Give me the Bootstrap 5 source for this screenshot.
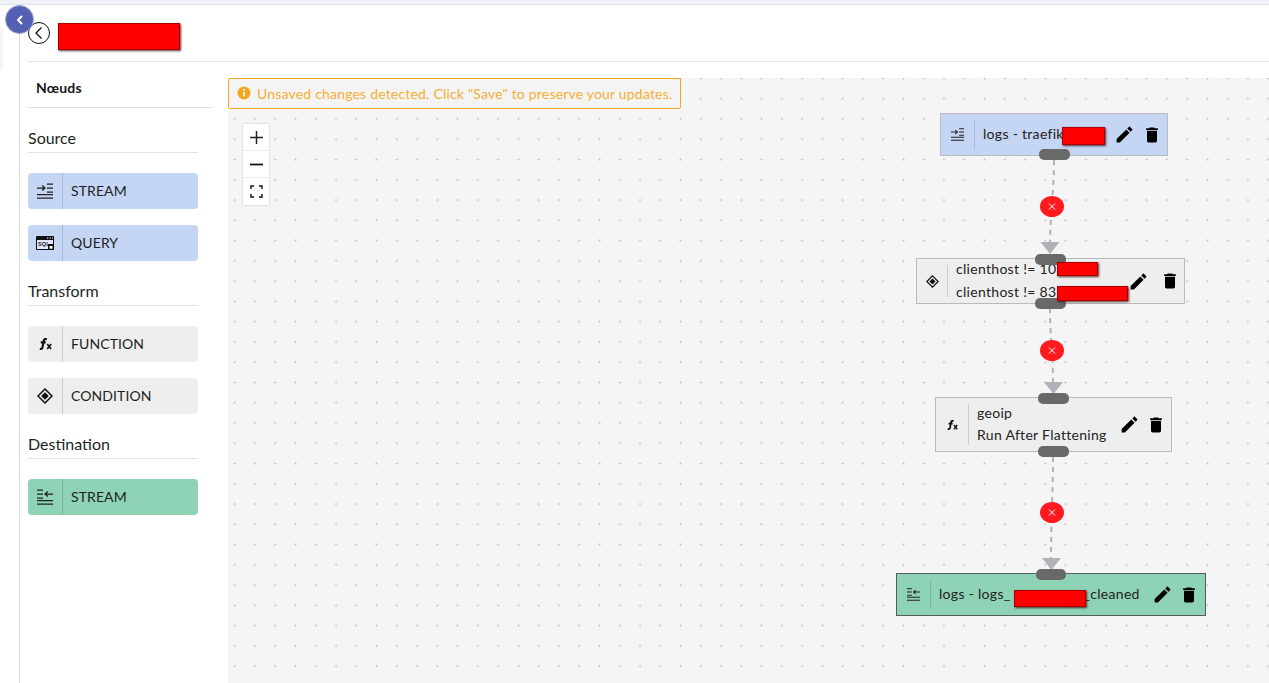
<!DOCTYPE html>
<html lang="fr">
<head>
<meta charset="utf-8">
<title>Pipeline</title>
<link href="https://cdn.jsdelivr.net/npm/bootstrap@5.3.0/dist/css/bootstrap.min.css" rel="stylesheet">
<style>
html,body{height:100%;overflow:hidden}
body{font-family:"Lato","Noto Sans",sans-serif;font-size:14px;color:#1d1f22;background:#fff}
.sprite{position:absolute;width:0;height:0}
.topstrip{height:5px;background:#f1f2f7;border-bottom:1px solid #dfe0e5}
.shell{height:678px}
.rail{width:20px;border-right:1px solid #dcdcdc;padding-top:22px}
.railtab{width:3px;height:43px;background:#f5f5f5;border-radius:0 3px 3px 0}
.collapse-btn{position:absolute;left:5px;top:5px;width:29px;height:29px;border-radius:50%;background:#5360b4;border:1px solid #a9afd6;z-index:5}
.pagehead{height:57px;margin-left:8px;border-bottom:1px solid #e2e2e2}
.backbtn{width:22px;height:22px;border-radius:50%;border:1px solid #111;background:#fff}
.side{width:208px;padding-left:8px}
.sidetitle{font-weight:700;font-size:14px;letter-spacing:.2px;width:184px;height:46px;padding:15px 0 0 8px;border-bottom:1px solid #e2e2e2;color:#16181b}
.grouplabel{width:170px;font-size:16px;line-height:20px;border-bottom:1px solid #e2e2e2;padding-bottom:4px;margin-bottom:20px;color:#1d1f22}
.grouplabel.first{margin-top:20px}
.grouplabel.mid{margin-top:20px}
.palette{width:170px;height:36px;border-radius:4px;margin-bottom:16px;font-size:14px;letter-spacing:.1px}
.palette .ic{width:35px;height:100%;border-right:1px solid rgba(0,0,0,.14)}
.palette .lb{padding:0 0 2px 8px}
.src{background:#c5d5f4}.trf{background:#eeeeee}.dst{background:#8fd3b6}
.canvas{position:relative;flex:1;margin-top:16px;background-color:#f5f5f5;background-image:radial-gradient(circle,#c4c4c4 .8px,transparent 1.2px);background-size:20.28px 20.28px;background-position:-3.44px 10.6px;overflow:hidden}
.toast-note{position:absolute;left:0;top:0;width:453px;height:31px;border:1px solid #f5a81f;border-radius:2px;background:#f4f4f4;color:#f6ae35;font-size:14px;letter-spacing:.19px;padding:0 0 1px 8px;gap:6px;white-space:nowrap}
.zoombox{position:absolute;left:15px;top:46px;width:26px;background:#fff;box-shadow:0 0 2px rgba(0,0,0,.2)}
.zoombox div{height:27px;border-bottom:1px solid #eee}
.zoombox div:last-child{border-bottom:0}
.flownode{position:absolute;border:1px solid #b8babd;font-size:14px;letter-spacing:.3px;color:#222}
.flownode .ic{height:calc(100% - 12px);border-right:1px solid rgba(0,0,0,.14)}
.flownode .nodetext{padding:0 0 2px 8px;white-space:nowrap}
.flownode .acts svg{display:block}
.hdl{position:absolute;height:11px;width:31px;background:#676a68;border-radius:5px;z-index:2}
.edges{position:absolute;left:0;top:0;z-index:1}
.redact{position:absolute;background:#f00;border:1px solid #a80000;box-shadow:1px 1px 2px rgba(60,0,0,.8);z-index:4}
</style>
</head>
<body>
<svg class="sprite" aria-hidden="true">
<defs>
<symbol id="i-in" viewBox="0 0 16 16"><path d="M0 5h7.500M5.200 2.500 8 5 5.200 7.500M10 1h6M10 5h6M10 9h6M0 11.500h16M0 15h16" fill="none" stroke="#222" stroke-width="1.250"/></symbol>
<symbol id="i-out" viewBox="0 0 16 16"><path d="M16 5H8.500M10.800 2.500 8 5l2.800 2.500M0 1h6M0 5h6M0 9h6M0 11.500h16M0 15h16" fill="none" stroke="#222" stroke-width="1.250"/></symbol>
<symbol id="i-fx" viewBox="0 0 12 11"><path d="M7.200 1.300C5.600.4 4.700 1 4.400 2.400L3.200 8.700C2.900 10 2.100 10.300 .8 9.800M1.600 4h4.600" fill="none" stroke="#111" stroke-width="2"/><path d="M7.600 5.500l3.600 4.700M11.200 5.500l-3.600 4.700" stroke="#111" stroke-width="1.500"/></symbol>
<symbol id="i-cond" viewBox="0 0 16 16"><path d="M8 1 15 8 8 15 1 8z" fill="none" stroke="#111" stroke-width="1.500"/><path d="M8 4.200 11.800 8 8 11.800 4.200 8z" fill="#111"/></symbol>
<symbol id="i-edit" viewBox="0 0 24 24"><path d="M3 17.250V21h3.750L17.810 9.940l-3.750-3.750L3 17.250zM20.710 7.040c.39-.39.39-1.020 0-1.410l-2.340-2.340c-.39-.39-1.020-.39-1.410 0l-1.830 1.830 3.750 3.750 1.830-1.830z"/></symbol>
<symbol id="i-del" viewBox="0 0 24 24"><path d="M6 19c0 1.100.9 2 2 2h8c1.100 0 2-.9 2-2V7H6v12zM19 4h-3.500l-1-1h-5l-1 1H5v2h14V4z"/></symbol>
</defs>
</svg>
<div class="topstrip"></div>
<div class="collapse-btn d-flex align-items-center justify-content-center">
<svg width="12" height="12" viewBox="0 0 12 12"><path d="M7.500 2.500 4 6l3.500 3.500" fill="none" stroke="#fff" stroke-width="2" stroke-linecap="round" stroke-linejoin="round"/></svg>
</div>
<div class="shell d-flex">
<div class="rail flex-shrink-0"><div class="railtab"></div></div>
<div class="flex-grow-1 d-flex flex-column">
<div class="pagehead d-flex align-items-center">
<div class="backbtn d-flex align-items-center justify-content-center">
<svg width="14" height="14" viewBox="0 0 14 14"><path d="M9.500 1.500 4 7l5.500 5.500" fill="none" stroke="#111" stroke-width="1.300"/></svg>
</div>
</div>
<div class="redact" style="left:58px;top:23px;width:122px;height:27px"></div>
<div class="d-flex flex-grow-1">
<div class="side flex-shrink-0">
<div class="sidetitle">Nœuds</div>
<div class="grouplabel first">Source</div>
<div class="palette src d-flex align-items-center">
<div class="ic d-flex align-items-center justify-content-center"><svg width="16" height="16"><use href="#i-in"/></svg></div>
<div class="lb">STREAM</div></div>
<div class="palette src d-flex align-items-center">
<div class="ic d-flex align-items-center justify-content-center"><svg width="18" height="14" viewBox="0 0 18 14"><rect width="18" height="14" rx="1" fill="#111"/><rect x="1" y="4" width="16" height="9" fill="#dfe6f7"/><text x="2" y="10" font-size="5.500" font-family="Liberation Sans" font-weight="700" fill="#222">SQL</text><rect x="12" y="8" width="6" height="6" fill="#111"/><rect x="13.500" y="10" width="3" height="2.700" fill="#fff"/><path d="M11 2h1.300M13.500 2h1.300M16 2h1" stroke="#fff"/></svg></div>
<div class="lb">QUERY</div></div>
<div class="grouplabel mid">Transform</div>
<div class="palette trf d-flex align-items-center">
<div class="ic d-flex align-items-center justify-content-center"><svg width="13" height="12"><use href="#i-fx"/></svg></div>
<div class="lb">FUNCTION</div></div>
<div class="palette trf d-flex align-items-center">
<div class="ic d-flex align-items-center justify-content-center"><svg width="16" height="16"><use href="#i-cond"/></svg></div>
<div class="lb">CONDITION</div></div>
<div class="grouplabel mid">Destination</div>
<div class="palette dst d-flex align-items-center">
<div class="ic d-flex align-items-center justify-content-center"><svg width="16" height="16"><use href="#i-out"/></svg></div>
<div class="lb">STREAM</div></div>
</div>

<div class="canvas">
<svg class="edges" width="1041" height="605" viewBox="228 78 1041 605">
<g fill="none" stroke="#b1b1b7" stroke-width="2" stroke-dasharray="5 5">
<path d="M1054 160C1054 190 1050 215 1050 245"/>
<path d="M1050 308C1050 340 1053 350 1053 384"/>
<path d="M1053 457C1053 490 1051 520 1051 560"/>
</g>
<g fill="#b1b1b7">
<path d="M1040.500 242h19l-9.500 12z"/>
<path d="M1044 382h19l-9.500 12z"/>
<path d="M1042 558h19l-9.500 12z"/>
</g>
<g fill="#ff1a1f">
<ellipse cx="1052" cy="206.500" rx="12" ry="10.500"/>
<ellipse cx="1052" cy="350.500" rx="12" ry="10.500"/>
<ellipse cx="1052" cy="512.500" rx="12" ry="10.500"/>
</g>
<g stroke="#fff" stroke-width="1">
<path d="M1049 203.500l6 6M1055 203.500l-6 6"/>
<path d="M1049 347.500l6 6M1055 347.500l-6 6"/>
<path d="M1049 509.500l6 6M1055 509.500l-6 6"/>
</g>
</svg>

<div class="toast-note d-flex align-items-center">
<svg width="14" height="14" viewBox="0 0 14 14"><circle cx="7" cy="7" r="6.500" fill="#f5a623"/><path d="M7 6v4.500" stroke="#fff" stroke-width="1.600"/><circle cx="7" cy="3.900" r="1" fill="#fff"/></svg>
<span>Unsaved changes detected. Click "Save" to preserve your updates.</span>
</div>

<div class="zoombox">
<div class="d-flex align-items-center justify-content-center"><svg width="13" height="13" viewBox="0 0 13 13"><path d="M6.500 0v13M0 6.500h13" stroke="#222" stroke-width="1.500"/></svg></div>
<div class="d-flex align-items-center justify-content-center"><svg width="13" height="13" viewBox="0 0 13 13"><path d="M0 6.500h13" stroke="#111" stroke-width="1.800"/></svg></div>
<div class="d-flex align-items-center justify-content-center"><svg width="13" height="13" viewBox="0 0 13 13"><path d="M1 4V1h3M9 1h3v3M12 9v3H9M4 12H1V9" fill="none" stroke="#111" stroke-width="1.400"/></svg></div>
</div>

<!-- node 1 -->
<div class="flownode src d-flex align-items-center" style="left:712px;top:35px;width:228px;height:43px">
<div class="ic d-flex align-items-center justify-content-center" style="width:34px"><svg width="13" height="13"><use href="#i-in"/></svg></div>
<div class="nodetext" style="width:139px">logs - traefik</div>
<div class="acts d-flex align-items-center" style="gap:7px"><svg width="21" height="21"><use href="#i-edit"/></svg><svg width="20" height="20"><use href="#i-del"/></svg></div>
</div>
<div class="hdl" style="left:811px;top:71px"></div>
<div class="redact" style="left:834px;top:49px;width:43px;height:18px"></div>

<!-- node 2 -->
<div class="flownode trf d-flex align-items-center" style="left:688px;top:180px;width:269px;height:46px">
<div class="ic d-flex align-items-center justify-content-center" style="width:31px"><svg width="13" height="13"><use href="#i-cond"/></svg></div>
<div class="nodetext" style="width:180px;line-height:23px"><div>clienthost != 10.</div><div>clienthost != 83.</div></div>
<div class="acts d-flex align-items-center" style="gap:11px"><svg width="21" height="21"><use href="#i-edit"/></svg><svg width="20" height="20"><use href="#i-del"/></svg></div>
</div>
<div class="hdl" style="left:807px;top:176px"></div>
<div class="hdl" style="left:807px;top:220px"></div>
<div class="redact" style="left:829px;top:184px;width:41px;height:14px"></div>
<div class="redact" style="left:829px;top:208px;width:71px;height:15px"></div>

<!-- node 3 -->
<div class="flownode trf d-flex align-items-center" style="left:707px;top:319px;width:237px;height:55px">
<div class="ic d-flex align-items-center justify-content-center" style="width:33px"><svg width="11" height="10"><use href="#i-fx"/></svg></div>
<div class="nodetext" style="width:150px;line-height:22px"><div>geoip</div><div>Run After Flattening</div></div>
<div class="acts d-flex align-items-center" style="gap:6px"><svg width="21" height="21"><use href="#i-edit"/></svg><svg width="20" height="20"><use href="#i-del"/></svg></div>
</div>
<div class="hdl" style="left:810px;top:315px"></div>
<div class="hdl" style="left:810px;top:368px"></div>

<!-- node 4 -->
<div class="flownode dst d-flex align-items-center" style="left:668px;top:495px;width:310px;height:43px;border-color:#555c5a">
<div class="ic d-flex align-items-center justify-content-center" style="width:34px"><svg width="13" height="13"><use href="#i-out"/></svg></div>
<div class="nodetext" style="width:221px">logs - logs_<span class="d-inline-block" style="width:73px"></span>_cleaned</div>
<div class="acts d-flex align-items-center" style="gap:6px"><svg width="21" height="21"><use href="#i-edit"/></svg><svg width="20" height="20"><use href="#i-del"/></svg></div>
</div>
<div class="hdl" style="left:808px;top:491px;width:30px"></div>
<div class="redact" style="left:786px;top:512px;width:72px;height:17px"></div>
</div>
</div>
</div>
</div>
</body>
</html>
